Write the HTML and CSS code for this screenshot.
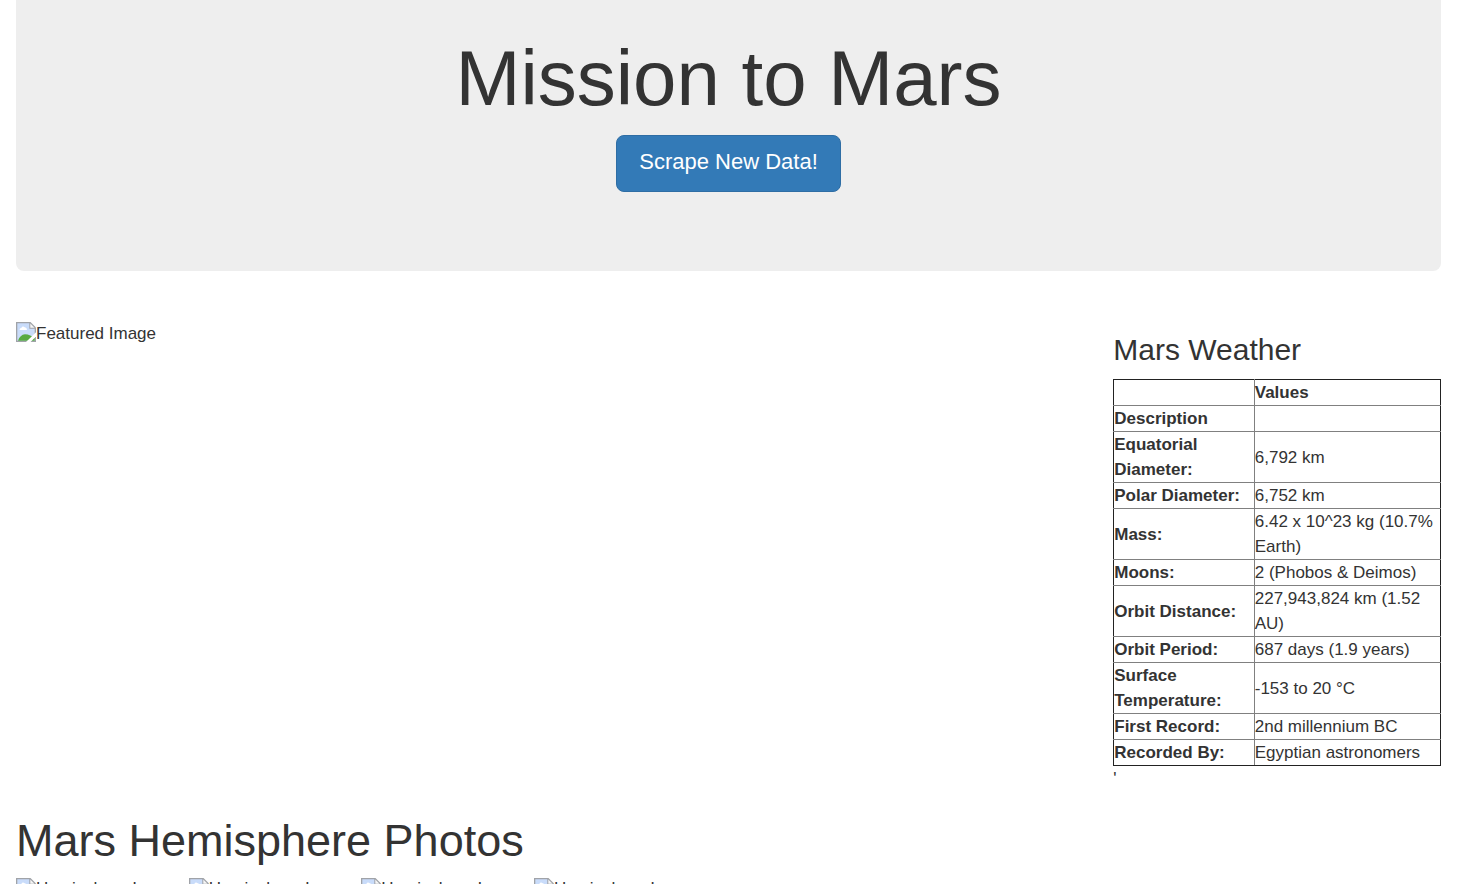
FILE: index.html
```html
<!DOCTYPE html>
<html lang="en">
<head>
<meta charset="utf-8">
<title>Mission to Mars</title>
<link rel="stylesheet" href="styles.css">
</head>
<body>
<svg class="sprite" aria-hidden="true">
  <symbol id="broken" viewBox="0 0 20 20">
    <path d="M0 0h14.500L20 5.500V20H0z" fill="#a0a3a8"/>
    <path d="M1.300 1.300h12v5.400h5.400v12H1.300z" fill="#c9dcfa"/>
    <path d="M14.300 1.500v4.200h4.200z" fill="#f6f6f6"/>
    <path d="M3.500 8q0-2 2-2.200 1-2.300 3.200-.6 2.300.2 2.300 2.800z" fill="#fff"/>
    <path d="M2 18.700q2-6 7-6.500 5.500.3 9.700 4v2.500z" fill="#58aa40"/>
    <path d="M20 10.200L10 20h4.500l5.500-5.500z" fill="#fff"/>
  </symbol>
</svg>
<div class="container">
  <header class="jumbotron">
    <h1 class="jumbotron-title">Mission to Mars</h1>
    <a class="button" href="#scrape">Scrape New Data!</a>
  </header>
  <main>
    <div class="overview">
      <div class="missing"><svg class="missing-icon"><use href="#broken"/></svg>Featured Image</div>
      <section class="weather">
        <h2 class="weather-title">Mars Weather</h2>
        <table class="facts">
          <thead>
            <tr><th></th><th>Values</th></tr>
            <tr><th>Description</th><th></th></tr>
          </thead>
          <tbody>
            <tr><th>Equatorial Diameter:</th><td>6,792 km</td></tr>
            <tr><th>Polar Diameter:</th><td>6,752 km</td></tr>
            <tr><th>Mass:</th><td>6.42 x 10^23 kg (10.7% Earth)</td></tr>
            <tr><th>Moons:</th><td>2 (Phobos &amp; Deimos)</td></tr>
            <tr><th>Orbit Distance:</th><td>227,943,824 km (1.52 AU)</td></tr>
            <tr><th>Orbit Period:</th><td>687 days (1.9 years)</td></tr>
            <tr><th>Surface Temperature:</th><td>-153 to 20 °C</td></tr>
            <tr><th>First Record:</th><td>2nd millennium BC</td></tr>
            <tr><th>Recorded By:</th><td>Egyptian astronomers</td></tr>
          </tbody>
        </table>
        <p class="note">'</p>
      </section>
    </div>
    <section>
      <h2 class="photos-title">Mars Hemisphere Photos</h2>
      <div class="photos">
        <div class="missing"><svg class="missing-icon"><use href="#broken"/></svg>Hemisphere Image</div>
        <div class="missing"><svg class="missing-icon"><use href="#broken"/></svg>Hemisphere Image</div>
        <div class="missing"><svg class="missing-icon"><use href="#broken"/></svg>Hemisphere Image</div>
        <div class="missing"><svg class="missing-icon"><use href="#broken"/></svg>Hemisphere Image</div>
      </div>
    </section>
  </main>
</div>
</body>
</html>
```
FILE: styles.css
```css
* { box-sizing: border-box; }
html { scrollbar-width: none; }
body {
  margin: 0;
  background: #fff;
  color: #333;
  font-family: "Liberation Sans", Arial, sans-serif;
  font-size: 17px;
  line-height: 25px;
}
h1, h2, p { margin: 0; font-weight: 400; }
.sprite { display: none; }
.container { padding: 0 19px 0 16px; }
.jumbotron {
  padding: 35px 16px 79px;
  border-radius: 0 0 8px 8px;
  background: #eee;
  text-align: center;
}
.jumbotron-title { margin-bottom: 13px; font-size: 78px; line-height: 87px; }
.button {
  display: block;
  width: fit-content;
  margin: 0 auto;
  padding: 11px 22px 14px;
  border: 1px solid #2e6da4;
  border-radius: 8px;
  background: #337ab7;
  color: #fff;
  font-size: 22px;
  line-height: 30px;
  text-decoration: none;
}
.overview {
  display: flex;
  justify-content: space-between;
  padding-top: 51px;
}
.missing { display: flex; align-items: flex-start; line-height: 23px; }
.missing-icon { flex: none; width: 20px; height: 20px; }
.weather { width: 23%; padding-top: 11px; }
.weather-title { margin-bottom: 13px; font-size: 30px; line-height: 33px; }
.facts {
  width: 100%;
  border-collapse: collapse;
  table-layout: fixed;
}
.facts th, .facts td {
  height: 26px;
  padding: 0;
  border: 1px solid #808080;
  text-align: left;
}
.facts th:first-child { width: 43%; border-left-color: #222; }
.facts tr > :last-child { border-right-color: #222; }
.facts thead tr:first-child > * { border-top-color: #222; }
.facts tbody tr:last-child > * { border-bottom-color: #222; }
.photos-title { margin: 24px 0 12px; font-size: 45px; line-height: 51px; }
.photos { display: flex; gap: 9px; }
.photos .missing { line-height: 21px; }
```
